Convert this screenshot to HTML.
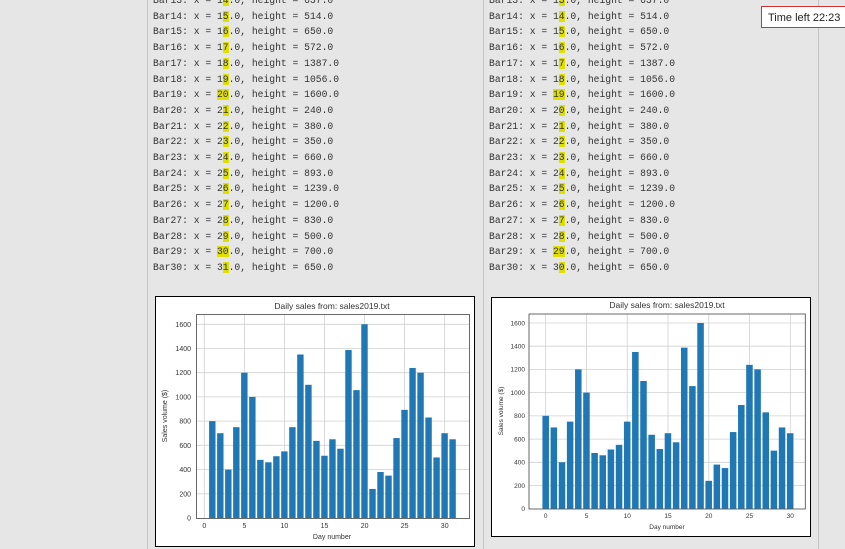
<!DOCTYPE html>
<html><head><meta charset="utf-8"><style>
body{margin:0;width:845px;height:549px;background:#e6e6e6;position:relative;overflow:hidden;font-family:"Liberation Sans",sans-serif}
.vl{position:absolute;top:0;width:1px;height:549px;background:#c4c4c4}
pre{position:absolute;margin:0;font-family:"Liberation Mono",monospace;font-size:9.7px;line-height:15.7px;color:#333}
pre b{font-weight:normal;background:#e0e000}
.time{position:absolute;left:761px;top:6px;width:90px;height:22px;border:1px solid #c33;background:#fff;font-size:11px;line-height:22px;padding-left:6px;box-sizing:border-box;color:#222}
svg{position:absolute;left:0;top:0}
</style></head><body>
<div class="vl" style="left:147px"></div>
<div class="vl" style="left:483px"></div>
<div class="vl" style="left:818px"></div>
<pre style="left:153px;top:-7px">Bar13: x = 1<b>4</b>.0, height = 637.0
Bar14: x = 1<b>5</b>.0, height = 514.0
Bar15: x = 1<b>6</b>.0, height = 650.0
Bar16: x = 1<b>7</b>.0, height = 572.0
Bar17: x = 1<b>8</b>.0, height = 1387.0
Bar18: x = 1<b>9</b>.0, height = 1056.0
Bar19: x = <b>20</b>.0, height = 1600.0
Bar20: x = 2<b>1</b>.0, height = 240.0
Bar21: x = 2<b>2</b>.0, height = 380.0
Bar22: x = 2<b>3</b>.0, height = 350.0
Bar23: x = 2<b>4</b>.0, height = 660.0
Bar24: x = 2<b>5</b>.0, height = 893.0
Bar25: x = 2<b>6</b>.0, height = 1239.0
Bar26: x = 2<b>7</b>.0, height = 1200.0
Bar27: x = 2<b>8</b>.0, height = 830.0
Bar28: x = 2<b>9</b>.0, height = 500.0
Bar29: x = <b>30</b>.0, height = 700.0
Bar30: x = 3<b>1</b>.0, height = 650.0</pre>
<pre style="left:489px;top:-7px">Bar13: x = 1<b>3</b>.0, height = 637.0
Bar14: x = 1<b>4</b>.0, height = 514.0
Bar15: x = 1<b>5</b>.0, height = 650.0
Bar16: x = 1<b>6</b>.0, height = 572.0
Bar17: x = 1<b>7</b>.0, height = 1387.0
Bar18: x = 1<b>8</b>.0, height = 1056.0
Bar19: x = <b>19</b>.0, height = 1600.0
Bar20: x = 2<b>0</b>.0, height = 240.0
Bar21: x = 2<b>1</b>.0, height = 380.0
Bar22: x = 2<b>2</b>.0, height = 350.0
Bar23: x = 2<b>3</b>.0, height = 660.0
Bar24: x = 2<b>4</b>.0, height = 893.0
Bar25: x = 2<b>5</b>.0, height = 1239.0
Bar26: x = 2<b>6</b>.0, height = 1200.0
Bar27: x = 2<b>7</b>.0, height = 830.0
Bar28: x = 2<b>8</b>.0, height = 500.0
Bar29: x = <b>29</b>.0, height = 700.0
Bar30: x = 3<b>0</b>.0, height = 650.0</pre>
<div class="time">Time left 22:23</div>
<svg width="845" height="549" font-family="Liberation Sans, sans-serif" fill="#333">
<defs>
<g id="bars" fill="#1f77b4">
<rect x="-0.4" width="0.8" height="800"/><rect x="0.6" width="0.8" height="700"/><rect x="1.6" width="0.8" height="400"/><rect x="2.6" width="0.8" height="750"/><rect x="3.6" width="0.8" height="1200"/><rect x="4.6" width="0.8" height="1000"/><rect x="5.6" width="0.8" height="480"/><rect x="6.6" width="0.8" height="460"/><rect x="7.6" width="0.8" height="510"/><rect x="8.6" width="0.8" height="550"/><rect x="9.6" width="0.8" height="750"/><rect x="10.6" width="0.8" height="1350"/><rect x="11.6" width="0.8" height="1100"/><rect x="12.6" width="0.8" height="637"/><rect x="13.6" width="0.8" height="514"/><rect x="14.6" width="0.8" height="650"/><rect x="15.6" width="0.8" height="572"/><rect x="16.6" width="0.8" height="1387"/><rect x="17.6" width="0.8" height="1056"/><rect x="18.6" width="0.8" height="1600"/><rect x="19.6" width="0.8" height="240"/><rect x="20.6" width="0.8" height="380"/><rect x="21.6" width="0.8" height="350"/><rect x="22.6" width="0.8" height="660"/><rect x="23.6" width="0.8" height="893"/><rect x="24.6" width="0.8" height="1239"/><rect x="25.6" width="0.8" height="1200"/><rect x="26.6" width="0.8" height="830"/><rect x="27.6" width="0.8" height="500"/><rect x="28.6" width="0.8" height="700"/><rect x="29.6" width="0.8" height="650"/>
</g>
</defs>
<!-- left chart -->
<rect x="155.5" y="296.5" width="319" height="250" fill="#fff" stroke="#000"/>
<g stroke="#d0d0d0" stroke-width="0.8">
<line x1="196" x2="469" y1="493.8" y2="493.8"/><line x1="196" x2="469" y1="469.6" y2="469.6"/><line x1="196" x2="469" y1="445.3" y2="445.3"/><line x1="196" x2="469" y1="421.1" y2="421.1"/><line x1="196" x2="469" y1="396.9" y2="396.9"/><line x1="196" x2="469" y1="372.7" y2="372.7"/><line x1="196" x2="469" y1="348.5" y2="348.5"/><line x1="196" x2="469" y1="324.3" y2="324.3"/>
<line y1="314" y2="518" x1="204.3" x2="204.3"/><line y1="314" y2="518" x1="244.4" x2="244.4"/><line y1="314" y2="518" x1="284.4" x2="284.4"/><line y1="314" y2="518" x1="324.5" x2="324.5"/><line y1="314" y2="518" x1="364.6" x2="364.6"/><line y1="314" y2="518" x1="404.6" x2="404.6"/><line y1="314" y2="518" x1="444.7" x2="444.7"/>
</g>
<g transform="translate(212.3,518) scale(8.01,-0.1211)"><use href="#bars"/></g>
<rect x="196.5" y="314.5" width="273" height="204" fill="none" stroke="#444" stroke-width="0.8"/>
<text x="332" y="309" font-size="8.5" text-anchor="middle">Daily sales from: sales2019.txt</text>
<g font-size="7" text-anchor="end">
<text x="191" y="520.5">0</text><text x="191" y="496.3">200</text><text x="191" y="472.1">400</text><text x="191" y="447.8">600</text><text x="191" y="423.6">800</text><text x="191" y="399.4">1000</text><text x="191" y="375.2">1200</text><text x="191" y="351">1400</text><text x="191" y="326.8">1600</text>
</g>
<g font-size="7" text-anchor="middle">
<text x="204.3" y="528">0</text><text x="244.4" y="528">5</text><text x="284.4" y="528">10</text><text x="324.5" y="528">15</text><text x="364.6" y="528">20</text><text x="404.6" y="528">25</text><text x="444.7" y="528">30</text>
<text x="332" y="539">Day number</text>
<text transform="translate(167,416) rotate(-90)">Sales volume ($)</text>
</g>
<!-- right chart -->
<rect x="491.5" y="297.5" width="319" height="239" fill="#fff" stroke="#000"/>
<g stroke="#d0d0d0" stroke-width="0.8">
<line x1="529" x2="805" y1="485.5" y2="485.5"/><line x1="529" x2="805" y1="462.3" y2="462.3"/><line x1="529" x2="805" y1="439.1" y2="439.1"/><line x1="529" x2="805" y1="415.9" y2="415.9"/><line x1="529" x2="805" y1="392.6" y2="392.6"/><line x1="529" x2="805" y1="369.4" y2="369.4"/><line x1="529" x2="805" y1="346.2" y2="346.2"/><line x1="529" x2="805" y1="323" y2="323"/>
<line y1="314" y2="509" x1="545.7" x2="545.7"/><line y1="314" y2="509" x1="586.5" x2="586.5"/><line y1="314" y2="509" x1="627.2" x2="627.2"/><line y1="314" y2="509" x1="668" x2="668"/><line y1="314" y2="509" x1="708.8" x2="708.8"/><line y1="314" y2="509" x1="749.5" x2="749.5"/><line y1="314" y2="509" x1="790.3" x2="790.3"/>
</g>
<g transform="translate(545.7,508.7) scale(8.15,-0.1161)"><use href="#bars"/></g>
<rect x="529" y="314" width="276.3" height="195" fill="none" stroke="#444" stroke-width="0.8"/>
<text x="667" y="308" font-size="8.5" text-anchor="middle">Daily sales from: sales2019.txt</text>
<g font-size="6.5" text-anchor="end">
<text x="525" y="511">0</text><text x="525" y="487.8">200</text><text x="525" y="464.6">400</text><text x="525" y="441.4">600</text><text x="525" y="418.2">800</text><text x="525" y="394.9">1000</text><text x="525" y="371.7">1200</text><text x="525" y="348.5">1400</text><text x="525" y="325.3">1600</text>
</g>
<g font-size="6.5" text-anchor="middle">
<text x="545.7" y="518">0</text><text x="586.5" y="518">5</text><text x="627.2" y="518">10</text><text x="668" y="518">15</text><text x="708.8" y="518">20</text><text x="749.5" y="518">25</text><text x="790.3" y="518">30</text>
<text x="667" y="529">Day number</text>
<text transform="translate(503,411) rotate(-90)">Sales volume ($)</text>
</g>
</svg>
</body></html>
